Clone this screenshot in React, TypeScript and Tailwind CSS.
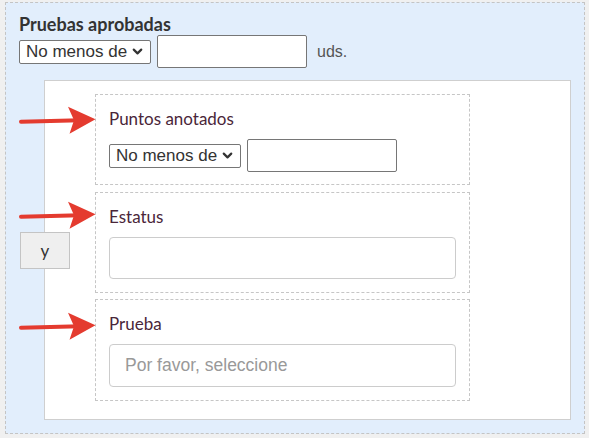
import { ChevronDown } from "lucide-react"

function FakeSelect() {
  return (
    <div className="flex h-[24px] w-[132px] items-center justify-between rounded-[2px] border border-[#767676] bg-white pl-[6px] pr-[5px] font-['Liberation_Sans',Arial,sans-serif] text-[17px] leading-none text-[#333]">
      <span>No menos de</span>
      <ChevronDown className="h-[15px] w-[15px] text-[#333]" strokeWidth={3.5} />
    </div>
  )
}

function NumberRow({ unit }: { unit?: string }) {
  return (
    <div className="flex items-center">
      <FakeSelect />
      <div className="ml-[6px] h-[33px] w-[150px] rounded-[2px] border border-[#767676] bg-white" />
      {unit && (
        <span className="ml-[10px] font-['Liberation_Sans',Arial,sans-serif] text-[16px] text-[#555]">
          {unit}
        </span>
      )}
    </div>
  )
}

function Arrow({ top }: { top: number }) {
  return (
    <svg
      className="absolute left-[18px] h-[30px] w-[80px]"
      style={{ top }}
      viewBox="0 0 80 30"
      aria-hidden="true"
    >
      <line x1="3" y1="15.7" x2="62" y2="14.2" stroke="#e43b2f" strokeWidth="4" strokeLinecap="round" />
      <polygon points="50,0.8 77.5,13.2 51.5,27.8 56,14.3" fill="#e43b2f" />
    </svg>
  )
}

function Field({ label, children, pb }: { label: string; children: React.ReactNode; pb: string }) {
  return (
    <div className={`border border-dashed border-[#c6c6c6] px-[13px] pt-[14px] ${pb}`}>
      <div className="font-['Lato',sans-serif] text-[17px] leading-[20px] text-[#4a2639]">{label}</div>
      <div className="mt-[10px]">{children}</div>
    </div>
  )
}

export default function App() {
  return (
    <div className="relative h-[438px] w-[589px] bg-[#f0f0f0] pl-[5px] pt-[2px]">
      <div className="h-[432px] w-[580px] border border-dashed border-[#c4c4c4] bg-[#e2eefc] px-[13px] pt-[11px]">
        <h2 className="font-['Lato',sans-serif] text-[18px] font-bold leading-[20px] text-[#333]">
          Pruebas aprobadas
        </h2>
        <div className="mt-[1px]">
          <NumberRow unit="uds." />
        </div>

        <div className="relative ml-[25px] mt-[12px] h-[340px] w-[527px] border border-[#cfcfcf] bg-white pl-[50px] pt-[13px]">
          <button className="absolute left-[-25px] top-[151px] flex h-[37px] w-[50px] items-center justify-center border border-[#c4c4c4] bg-[#efefef] font-['Lato',sans-serif] text-[17px] text-[#333]">
            y
          </button>

          <div className="w-[375px]">
            <Field label="Puntos anotados" pb="pb-[12px]">
              <NumberRow />
            </Field>
            <div className="mt-[7px]">
              <Field label="Estatus" pb="pb-[13px]">
                <div className="h-[42px] w-full rounded-[4px] border border-[#cccccc] bg-white" />
              </Field>
            </div>
            <div className="mt-[6px]">
              <Field label="Prueba" pb="pb-[13px]">
                <div className="flex h-[43px] w-full items-center rounded-[4px] border border-[#cccccc] bg-white pl-[15px] font-['Liberation_Sans',Arial,sans-serif] text-[17.5px] text-[#999]">
                  Por favor, seleccione
                </div>
              </Field>
            </div>
          </div>
        </div>
      </div>

      <Arrow top={106} />
      <Arrow top={201} />
      <Arrow top={312} />
    </div>
  )
}
